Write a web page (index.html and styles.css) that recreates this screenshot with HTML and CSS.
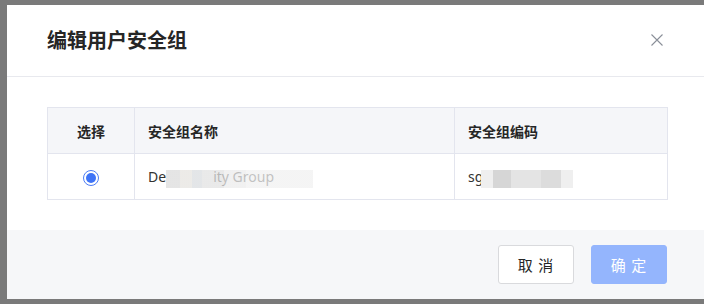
FILE: index.html
```html
<!DOCTYPE html>
<html lang="zh">
<head>
<meta charset="utf-8">
<link rel="stylesheet" href="styles.css">
</head>
<body>
<div class="backdrop">
  <div class="modal">
    <div class="modal-header">
      <h2 class="modal-title">编辑用户安全组</h2>
      <button class="close-btn" aria-label="关闭">
        <svg width="12" height="12" viewBox="0 0 12 12"><path d="M0.5 0.5 L11.5 11.5 M11.5 0.5 L0.5 11.5" stroke="#8a8f99" stroke-width="1.1" fill="none"/></svg>
      </button>
    </div>
    <div class="modal-body">
      <table class="sg-table">
        <colgroup><col class="c1"><col class="c2"><col class="c3"></colgroup>
        <thead>
          <tr><th class="center">选择</th><th>安全组名称</th><th>安全组编码</th></tr>
        </thead>
        <tbody>
          <tr>
            <td class="center"><span class="radio checked"></span></td>
            <td><span class="masked">De<span class="blur b1"></span>ity Group</span></td>
            <td><span class="masked">sg<span class="blur b2"></span></span></td>
          </tr>
        </tbody>
      </table>
    </div>
    <div class="modal-footer">
      <button class="btn btn-default">取 消</button>
      <button class="btn btn-primary" disabled>确 定</button>
    </div>
  </div>
</div>
</body>
</html>
```
FILE: styles.css
```css
* { box-sizing: border-box; }
html, body { margin: 0; padding: 0; }
body {
  width: 704px;
  height: 304px;
  overflow: hidden;
  background: #7a7a7a;
  font-family: "Noto Sans CJK SC", "Noto Sans", sans-serif;
  color: #262626;
}
.backdrop {
  padding: 5px 0 0 7px;
}
.modal {
  width: 700px;
  height: 294px;
  background: #fff;
  display: flex;
  flex-direction: column;
}
.modal-header {
  height: 72px;
  border-bottom: 1px solid #e8e9ee;
  display: flex;
  align-items: center;
  justify-content: space-between;
  padding: 0 44px 2px 40px;
}
.modal-title {
  margin: 0;
  font-size: 20px;
  font-weight: 700;
  color: #262626;
  line-height: 28px;
}
.close-btn {
  border: 0;
  background: none;
  padding: 0;
  width: 12px;
  height: 12px;
  display: flex;
}
.modal-body {
  padding: 30px 40px 0 40px;
  height: 153px;
}
.sg-table {
  width: 620px;
  border-collapse: collapse;
  table-layout: fixed;
  font-size: 14px;
}
.c1 { width: 87px; }
.c2 { width: 320px; }
.c3 { width: 213px; }
.sg-table th, .sg-table td {
  border: 1px solid #e3e5ee;
  height: 46px;
  padding: 0 0 0 13px;
  text-align: left;
  line-height: 20px;
}
.sg-table th {
  background: #f5f6f9;
  font-weight: 600;
  color: #262626;
}
.sg-table td { color: #333; font-family: "Noto Sans", "Noto Sans CJK SC", sans-serif; }
.sg-table .center { text-align: center; padding: 0; }
.radio {
  display: inline-block;
  width: 16px;
  height: 16px;
  border-radius: 50%;
  border: 1px solid #4c7cf5;
  position: relative;
  vertical-align: middle;
}
.radio.checked::after {
  content: "";
  position: absolute;
  left: 2px; top: 2px;
  width: 10px; height: 10px;
  border-radius: 50%;
  background: #3f74f6;
}
.masked { position: relative; display: inline-flex; align-items: center; }
.blur {
  display: inline-block;
  height: 18px;
  margin-top: 4px;
}
.b1 {
  width: 147px;
  margin-right: -100px;
  background: linear-gradient(90deg, #dcdcdc 0 14px, #e6e4e0 14px 26px, #dadde0 26px 36px, #e2e2e2 36px 58px, #ececec 58px 80px, #f1f1f1 80px 147px);
  opacity: 0.75;
  position: relative;
  z-index: 1;
}
.b2 {
  width: 92px;
  margin-left: -2px;
  background: linear-gradient(90deg, #efefef 0 12px, #d6d6d6 12px 30px, #e4e4e4 30px 60px, #dcdcdc 60px 80px, #efefef 80px 92px);
}
.modal-footer {
  flex: 1;
  background: #f6f7f9;
  display: flex;
  justify-content: flex-end;
  align-items: flex-start;
  gap: 17px;
  padding: 15px 40px 0 0;
}
.btn {
  width: 76px;
  height: 39px;
  border-radius: 3px;
  font-size: 15px;
  font-family: "Noto Sans CJK SC", sans-serif;
  padding: 0;
  letter-spacing: 1px;
}
.btn-default {
  background: #fff;
  border: 1px solid #d9dadd;
  color: #262626;
}
.btn-primary {
  background: #94b5fd;
  border: 1px solid #94b5fd;
  color: #fff;
}
```
